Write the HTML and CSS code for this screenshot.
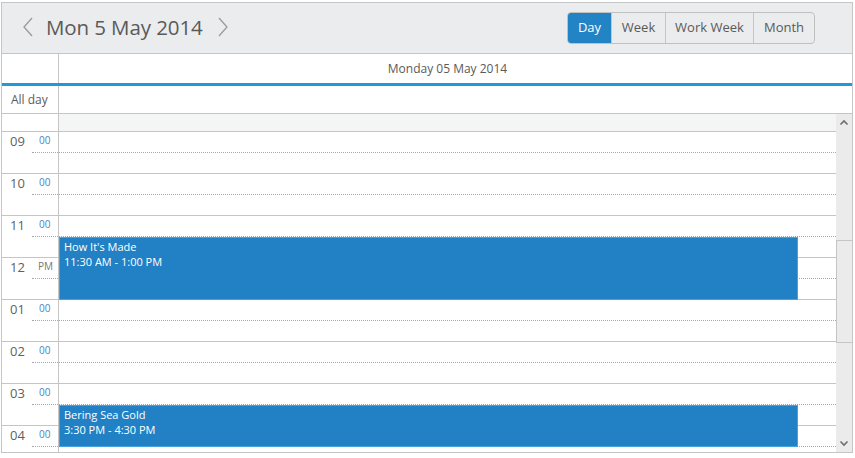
FILE: index.html
```html
<!DOCTYPE html>
<html>
<head>
<meta charset="utf-8">
<link rel="stylesheet" href="styles.css">
</head>
<body>
<div class="scheduler">
  <div class="toolbar">
    <div class="nav">
      <span class="arrow"><svg width="12" height="20" viewBox="0 0 12 20"><polyline points="10,1 2,10 10,19" fill="none" stroke="#9a9a9a" stroke-width="1.3"/></svg></span>
      <span class="title">Mon 5 May 2014</span>
      <span class="arrow"><svg width="12" height="20" viewBox="0 0 12 20"><polyline points="2,1 10,10 2,19" fill="none" stroke="#9a9a9a" stroke-width="1.3"/></svg></span>
    </div>
    <div class="views">
      <span class="view v-day active">Day</span>
      <span class="view v-week">Week</span>
      <span class="view v-work">Work Week</span>
      <span class="view v-month">Month</span>
    </div>
  </div>
  <div class="dayhead">
    <div class="corner"></div>
    <div class="daytitle">Monday 05 May 2014</div>
  </div>
  <div class="allday">
    <div class="corner">All day</div>
    <div class="allcell"></div>
  </div>
  <div class="body">
    <div class="times">
      <div class="tpre"></div>
      <div class="hour"><span class="hnum">09</span><div class="hmin"><span>00</span></div></div>
      <div class="hour"><span class="hnum">10</span><div class="hmin"><span>00</span></div></div>
      <div class="hour"><span class="hnum">11</span><div class="hmin"><span>00</span></div></div>
      <div class="hour"><span class="hnum">12</span><div class="hmin pm"><span>PM</span></div></div>
      <div class="hour"><span class="hnum">01</span><div class="hmin"><span>00</span></div></div>
      <div class="hour"><span class="hnum">02</span><div class="hmin"><span>00</span></div></div>
      <div class="hour"><span class="hnum">03</span><div class="hmin"><span>00</span></div></div>
      <div class="hour"><span class="hnum">04</span><div class="hmin"><span>00</span></div></div>
    </div>
    <div class="grid">
      <div class="gpre"></div>
      <div class="slot half"></div><div class="slot"></div>
      <div class="slot half"></div><div class="slot"></div>
      <div class="slot half"></div><div class="slot"></div>
      <div class="slot half"></div><div class="slot"></div>
      <div class="slot half"></div><div class="slot"></div>
      <div class="slot half"></div><div class="slot"></div>
      <div class="slot half"></div><div class="slot"></div>
      <div class="slot half"></div><div class="slot"></div>
      <div class="event ev1"><div>How It's Made</div><div>11:30 AM - 1:00 PM</div></div>
      <div class="event ev2"><div>Bering Sea Gold</div><div>3:30 PM - 4:30 PM</div></div>
    </div>
    <div class="scrollbar">
      <span class="sarrow"><svg width="10" height="7" viewBox="0 0 10 7"><polyline points="1.5,5.5 5,2 8.5,5.5" fill="none" stroke="#6d6d6d" stroke-width="1.6"/></svg></span>
      <div class="track"><div class="thumb"></div></div>
      <span class="sarrow"><svg width="10" height="7" viewBox="0 0 10 7"><polyline points="1.5,1.5 5,5 8.5,1.5" fill="none" stroke="#6d6d6d" stroke-width="1.6"/></svg></span>
    </div>
  </div>
</div>
</body>
</html>
```
FILE: styles.css
```css
* { box-sizing: border-box; }
body {
  margin: 0;
  font-family: "Open Sans", "Noto Sans", sans-serif;
  color: #555;
  background: #fff;
}
.scheduler {
  margin: 2px 0 0 1px;
  width: 852px;
  height: 451px;
  border: 1px solid #c5c5c5;
  display: flex;
  flex-direction: column;
  overflow: hidden;
}
.toolbar {
  height: 51px;
  flex: none;
  background: #ebecee;
  border-bottom: 1px solid #c5c5c5;
  display: flex;
  align-items: flex-start;
  justify-content: space-between;
}
.nav {
  display: flex;
  align-items: center;
  height: 47px;
  padding-left: 20px;
}
.arrow { display: flex; width: 14px; height: 20px; }
.title {
  font-size: 20.5px;
  color: #5a5a5a;
  margin: 0 14px 0 10px;
  letter-spacing: -0.1px;
}
.views {
  display: flex;
  margin: 9px 37px 0 0;
  border: 1px solid #c0c0c0;
  border-radius: 4px;
  overflow: hidden;
  background: #ebecee;
}
.view {
  height: 30px;
  line-height: 29px;
  font-size: 13px;
  text-align: center;
  border-left: 1px solid #c5c5c5;
  color: #5a5a5a;
}
.v-day { width: 43px; border-left: 0; }
.v-week { width: 54px; }
.v-work { width: 88px; }
.v-month { width: 61px; }
.view.active { background: #2283c5; color: #fff; }
.dayhead {
  height: 32px;
  flex: none;
  display: flex;
  border-bottom: 3px solid #1e9ad6;
}
.corner {
  width: 57px;
  flex: none;
  border-right: 1px solid #c5c5c5;
  font-size: 12px;
}
.daytitle {
  flex: 1;
  text-align: center;
  font-size: 12px;
  line-height: 30px;
  padding-right: 16px;
  color: #5a5a5a;
}
.allday {
  height: 28px;
  flex: none;
  display: flex;
  border-bottom: 1px solid #c5c5c5;
}
.allday .corner {
  line-height: 27px;
  padding-left: 9px;
  color: #5a5a5a;
}
.allcell { flex: 1; }
.body {
  flex: 1;
  display: flex;
  overflow: hidden;
}
.times {
  width: 57px;
  flex: none;
  border-right: 1px solid #c5c5c5;
}
.tpre { height: 18px; border-bottom: 1px solid #c5c5c5; }
.hour {
  height: 42px;
  border-bottom: 1px solid #c5c5c5;
  display: flex;
}
.hnum {
  width: 30px;
  padding-left: 8px;
  font-size: 13px;
  line-height: 19px;
  color: #5f5f5f;
}
.hmin {
  width: 26px;
  height: 21px;
  border-bottom: 1px dotted #a8a8a8;
  font-size: 10px;
  line-height: 16px;
  padding-left: 7px;
  color: #4a82c0;
}
.hmin.pm { color: #777; padding-left: 6px; }
.grid {
  flex: 1;
  position: relative;
}
.gpre { height: 18px; background: #f4f5f5; border-bottom: 1px solid #c5c5c5; }
.slot { height: 21px; border-bottom: 1px solid #c5c5c5; }
.slot.half { border-bottom: 1px dotted #a8a8a8; }
.event {
  position: absolute;
  left: 0;
  width: 739px;
  background: #2181c4;
  border: 1px solid #47a3e0;
  color: #fff;
  font-size: 11px;
  line-height: 15px;
  padding: 1px 0 0 4px;
}
.ev1 { top: 123px; height: 63px; }
.ev2 { top: 291px; height: 42px; }
.scrollbar {
  width: 16px;
  flex: none;
  background: #ebebeb;
  display: flex;
  flex-direction: column;
}
.sarrow {
  height: 17px;
  display: flex;
  align-items: center;
  justify-content: center;
  flex: none;
}
.track { flex: 1; padding-top: 109px; }
.thumb {
  height: 103px;
  border: 1px solid #c5c5c5;
  border-right: 0;
  background: #ebebeb;
}
```
